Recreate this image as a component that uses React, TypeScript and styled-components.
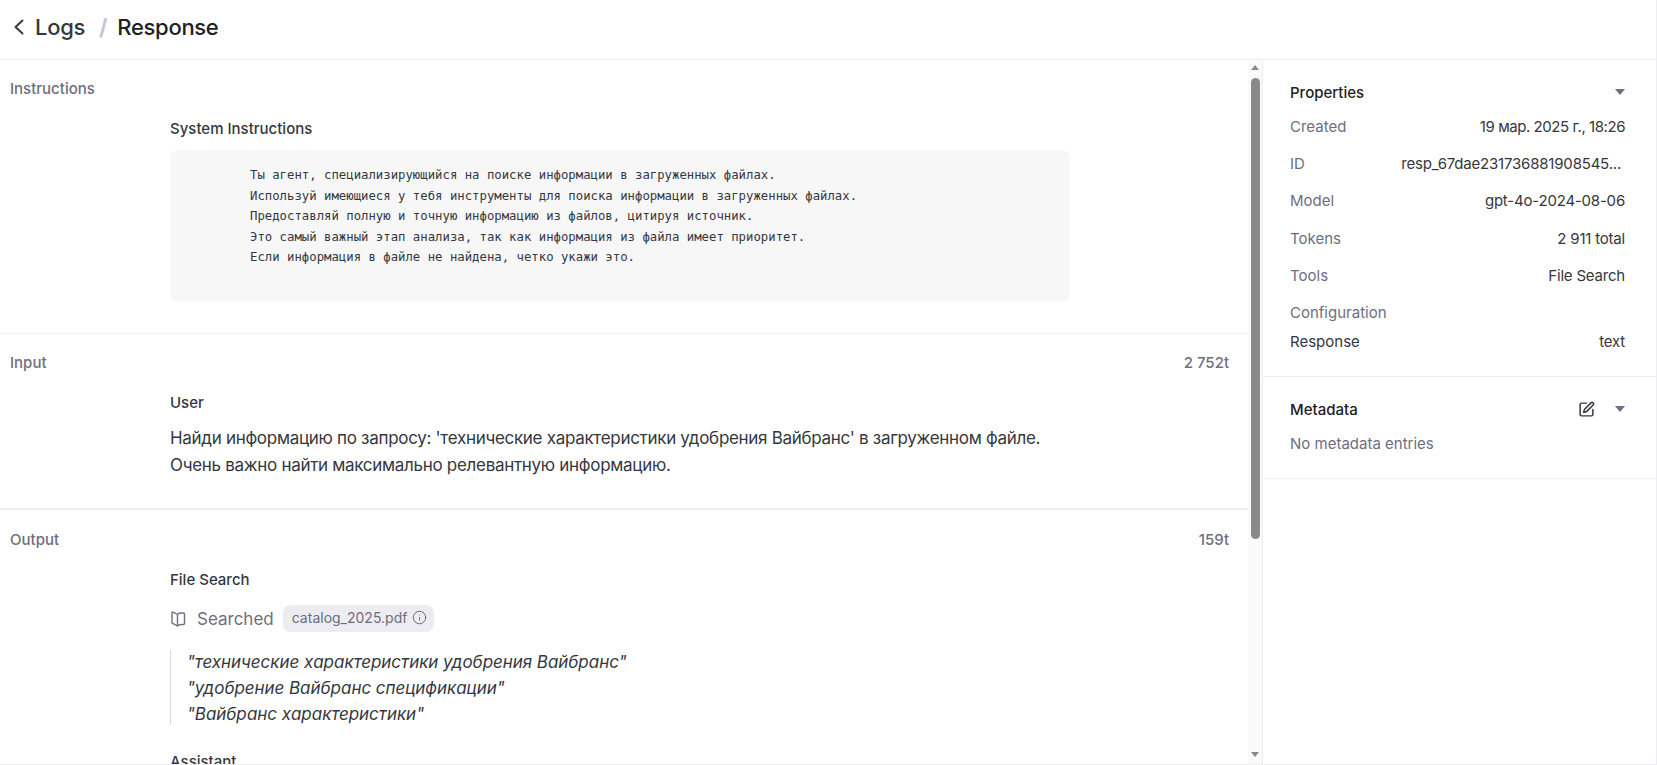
import React from "react";
import styled, { createGlobalStyle } from "styled-components";
import { Info, SquarePen } from "lucide-react";

const Global = createGlobalStyle`
  html, body { margin: 0; padding: 0; height: 100%; background: #fff; overflow: hidden; }
  #root { height: 100%; }
  * { box-sizing: border-box; }
`;

const Page = styled.div`
  height: 765px;
  display: flex;
  flex-direction: column;
  font-family: Inter, "Noto Sans", sans-serif;
  color: #353740;
  border-bottom: 1px solid #ececf1;
  border-right: 1px solid #ececf1;
`;

const Header = styled.header`
  height: 60px;
  flex: none;
  display: flex;
  align-items: center;
  padding: 0 0 5px 13px;
  border-bottom: 1px solid #ececf1;
  font-size: 22px;
  font-weight: 500;
  letter-spacing: -0.3px;
`;

const BackLink = styled.span`
  display: flex;
  align-items: center;
  gap: 10px;
  color: #353740;
`;

const BackIcon = styled.svg`
  width: 12px;
  height: 16px;
  flex: none;
`;

const Slash = styled.span`
  color: #c5c5d2;
  font-weight: 700;
  margin: 0 10px 0 14px;
`;

const Crumb = styled.span`
  color: #202123;
`;

const Body = styled.div`
  flex: 1;
  min-height: 0;
  display: flex;
`;

const Main = styled.main`
  flex: 1;
  min-width: 0;
  overflow: hidden;
`;

const Section = styled.section<{ $thick?: boolean }>`
  padding: 19px 19px ${(p) => (p.$thick ? "29px" : "32px")} 10px;
  border-bottom: ${(p) => (p.$thick ? "2px" : "1px")} solid #ececf1;
`;

const LastSection = styled(Section)`
  border-bottom: none;
  padding-top: 20px;
  padding-bottom: 0;
`;

const SectionHead = styled.div`
  display: flex;
  justify-content: space-between;
  font-size: 15px;
  line-height: 20px;
  font-weight: 500;
  color: #6e6e80;
`;

const Content = styled.div`
  margin-left: 160px;
  width: 900px;
  padding-top: 20px;
`;

const Role = styled.div`
  font-size: 15px;
  line-height: 20px;
  font-weight: 500;
  color: #353740;
`;

const CodeBox = styled.pre`
  margin: 11px 0 0;
  height: 151px;
  padding: 15px 20px 0 80px;
  background: #f7f7f8;
  border-radius: 8px;
  font-family: "DejaVu Sans Mono", monospace;
  font-size: 12.3px;
  line-height: 20.5px;
  color: #353740;
  white-space: pre;
`;

const Message = styled.p`
  margin: 12px 0 0;
  font-size: 17px;
  line-height: 27px;
  letter-spacing: -0.3px;
  color: #353740;
`;

const SearchRow = styled.div`
  margin-top: 15px;
  display: flex;
  align-items: center;
  height: 27px;
  font-size: 17px;
  color: #6e6e80;
`;

const BookIcon = styled.svg`
  width: 15px;
  height: 16px;
  margin: 0 11px 0 1px;
  flex: none;
`;

const Chip = styled.span`
  margin-left: 9px;
  height: 27px;
  padding: 0 7px 2px 9px;
  display: inline-flex;
  align-items: center;
  gap: 5px;
  background: #ececf1;
  border-radius: 8px;
  font-size: 14px;
  color: #6e6e80;
`;

const Quote = styled.blockquote`
  margin: 18px 0 27px;
  padding-left: 16px;
  border-left: 1px solid #d9d9e3;
  height: 75px;
  display: flex;
  flex-direction: column;
  justify-content: center;
  font-size: 17px;
  font-style: italic;
  line-height: 26px;
  letter-spacing: -0.05px;
  color: #353740;
`;

const QuoteLine = styled.div`
  flex: none;
`;

const Track = styled.div`
  width: 14px;
  flex: none;
  background: #fafafa;
  display: flex;
  flex-direction: column;
  align-items: center;
  padding-top: 5px;
`;

const ArrowUp = styled.div`
  width: 0;
  height: 0;
  border-left: 4.5px solid transparent;
  border-right: 4.5px solid transparent;
  border-bottom: 5px solid #8a8a8a;
`;

const ArrowDown = styled(ArrowUp)`
  border-bottom: none;
  border-top: 5px solid #8a8a8a;
  margin-top: auto;
  margin-bottom: 7px;
`;

const Thumb = styled.div`
  width: 9px;
  height: 461px;
  margin-top: 8px;
  background: #8a8a8a;
  border-radius: 5px;
`;

const Side = styled.aside`
  width: 394px;
  flex: none;
  border-left: 1px solid #ececf1;
  font-size: 15px;
`;

const Panel = styled.div<{ $height: number }>`
  height: ${(p) => p.$height}px;
  padding: 21px 31px 0 27px;
  border-bottom: 1px solid #ececf1;
`;

const PanelTitle = styled.div`
  display: flex;
  align-items: center;
  height: 22px;
  font-size: 15px;
  font-weight: 500;
  color: #202123;
`;

const PanelActions = styled.div`
  margin-left: auto;
  display: flex;
  align-items: center;
  gap: 20px;
  color: #353740;
`;

const Caret = styled.span`
  width: 0;
  height: 0;
  border-left: 5px solid transparent;
  border-right: 5px solid transparent;
  border-top: 6px solid #6e6e80;
`;

const Row = styled.div<{ $h?: number }>`
  display: flex;
  justify-content: space-between;
  align-items: center;
  height: ${(p) => p.$h ?? 37.2}px;
  gap: 16px;
`;

const Key = styled.span<{ $dark?: boolean }>`
  color: ${(p) => (p.$dark ? "#353740" : "#6e6e80")};
`;

const Val = styled.span<{ $spacing?: number; $inset?: number }>`
  color: #353740;
  letter-spacing: ${(p) => p.$spacing ?? -0.2}px;
  margin-right: ${(p) => p.$inset ?? 0}px;
`;

const Rows = styled.div`
  margin-top: 5px;
`;

const Empty = styled.div`
  margin-top: 13px;
  line-height: 22px;
  color: #6e6e80;
`;

const code = `Ты агент, специализирующийся на поиске информации в загруженных файлах.
Используй имеющиеся у тебя инструменты для поиска информации в загруженных файлах.
Предоставляй полную и точную информацию из файлов, цитируя источник.
Это самый важный этап анализа, так как информация из файла имеет приоритет.
Если информация в файле не найдена, четко укажи это.`;

const props: { k: string; v: string; spacing?: number; inset?: number }[] = [
  { k: "Created", v: "19 мар. 2025 г., 18:26", spacing: -0.45 },
  { k: "ID", v: "resp_67dae231736881908545...", spacing: -0.2, inset: 4 },
  { k: "Model", v: "gpt-4o-2024-08-06" },
  { k: "Tokens", v: "2 911 total" },
  { k: "Tools", v: "File Search" },
];

const quotes = [
  '"технические характеристики удобрения Вайбранс"',
  '"удобрение Вайбранс спецификации"',
  '"Вайбранс характеристики"',
];

export default function App() {
  return (
    <Page>
      <Global />
      <Header>
        <BackLink>
          <BackIcon viewBox="0 0 12 16" fill="none" stroke="#353740" strokeWidth="1.9" strokeLinecap="round" strokeLinejoin="round">
            <path d="M9.500 1.500 2.500 8l7 6.500" />
          </BackIcon>
          Logs
        </BackLink>
        <Slash>/</Slash>
        <Crumb>Response</Crumb>
      </Header>
      <Body>
        <Main>
          <Section>
            <SectionHead>Instructions</SectionHead>
            <Content>
              <Role>System Instructions</Role>
              <CodeBox>{code}</CodeBox>
            </Content>
          </Section>
          <Section $thick>
            <SectionHead>
              <span>Input</span>
              <span>2 752t</span>
            </SectionHead>
            <Content>
              <Role>User</Role>
              <Message>
                Найди информацию по запросу: 'технические характеристики удобрения Вайбранс' в загруженном файле.
                <br />
                Очень важно найти максимально релевантную информацию.
              </Message>
            </Content>
          </Section>
          <LastSection>
            <SectionHead>
              <span>Output</span>
              <span>159t</span>
            </SectionHead>
            <Content>
              <Role>File Search</Role>
              <SearchRow>
                <BookIcon viewBox="0 0 15 16" fill="none" stroke="#6e6e80" strokeWidth="1.4" strokeLinejoin="round">
                  <path d="M6.500 3.500 2.100 1.200C1.500.9 1 1.200 1 1.800v9.700c0 .4.2.7.6.9L6.500 15V3.500Z" />
                  <path d="M6.500 3c1.100-.7 2.500-1 4-1h2c.6 0 1 .4 1 1v9.500c0 .6-.4 1-1 1h-2c-1.600 0-3 .4-4 1.500" />
                </BookIcon>
                Searched
                <Chip>
                  catalog_2025.pdf
                  <Info size={15} strokeWidth={1.6} />
                </Chip>
              </SearchRow>
              <Quote>
                {quotes.map((q) => (
                  <QuoteLine key={q}>{q}</QuoteLine>
                ))}
              </Quote>
              <Role>Assistant</Role>
            </Content>
          </LastSection>
        </Main>
        <Track>
          <ArrowUp />
          <Thumb />
          <ArrowDown />
        </Track>
        <Side>
          <Panel $height={317}>
            <PanelTitle>
              Properties
              <PanelActions>
                <Caret />
              </PanelActions>
            </PanelTitle>
            <Rows>
              {props.map((p) => (
                <Row key={p.k}>
                  <Key>{p.k}</Key>
                  <Val $spacing={p.spacing} $inset={p.inset}>
                    {p.v}
                  </Val>
                </Row>
              ))}
              <Row $h={37}>
                <Key>Configuration</Key>
              </Row>
              <Row $h={22}>
                <Key $dark>Response</Key>
                <Val>text</Val>
              </Row>
            </Rows>
          </Panel>
          <Panel $height={102}>
            <PanelTitle>
              Metadata
              <PanelActions>
                <SquarePen size={17} strokeWidth={2.1} />
                <Caret />
              </PanelActions>
            </PanelTitle>
            <Empty>No metadata entries</Empty>
          </Panel>
        </Side>
      </Body>
    </Page>
  );
}
